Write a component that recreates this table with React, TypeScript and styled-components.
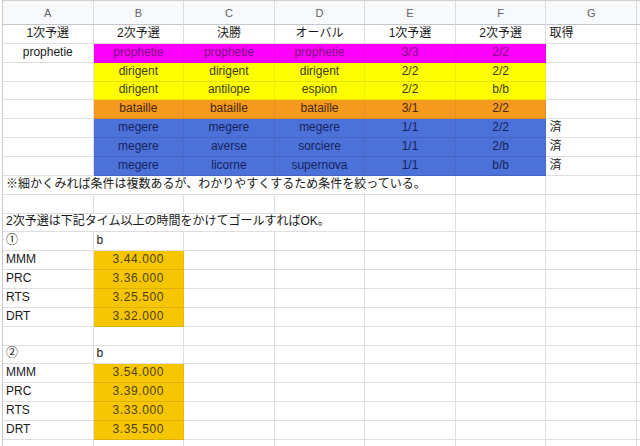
import React from 'react'
import styled, { createGlobalStyle } from 'styled-components'

const GlobalStyle = createGlobalStyle`
  html, body {
    margin: 0;
    padding: 0;
    background: #ffffff;
    overflow: hidden;
  }
  body {
    font-family: "Liberation Sans", "Noto Sans CJK JP", sans-serif;
  }
`

type Fill = 'magenta' | 'yellow' | 'orange' | 'blue' | 'gold'

const fills: Record<Fill, { bg: string; fg: string }> = {
  magenta: { bg: '#fd00fc', fg: '#7e0a82' },
  yellow: { bg: '#fffe00', fg: '#3c3c04' },
  orange: { bg: '#f5991f', fg: '#47280c' },
  blue: { bg: '#4c71d8', fg: '#16245e' },
  gold: { bg: '#f6c602', fg: '#4f3f04' },
}

type CellSpec = {
  text?: string
  fill?: Fill
  align?: 'left' | 'center'
  span?: number
}

const COLS = ['A', 'B', 'C', 'D', 'E', 'F', 'G', '']

const Sheet = styled.div`
  display: grid;
  grid-template-columns: repeat(7, 90.57px) 1fr;
  grid-template-rows: 24px;
  grid-auto-rows: 18.87px;
  width: 638px;
  margin-left: 2px;
  border-left: 1px solid #c9c9c9;
  border-top: 1px solid #d0d0d0;
  box-sizing: border-box;
  height: 446px;
  overflow: hidden;
`

const ColHeader = styled.div`
  display: flex;
  align-items: center;
  justify-content: center;
  background: #f8f9fa;
  border-right: 1px solid #dadcdf;
  border-bottom: 1px solid #c4c7c9;
  box-sizing: border-box;
  color: #5f6368;
  font-size: 11px;
`

const Cell = styled.div<{ $fill?: Fill; $align: 'left' | 'center'; $span: number }>`
  grid-column: span ${(p) => p.$span};
  display: flex;
  align-items: flex-end;
  justify-content: ${(p) => (p.$align === 'center' ? 'center' : 'flex-start')};
  padding: 0 3px 2px;
  box-sizing: border-box;
  min-width: 0;
  white-space: nowrap;
  overflow: visible;
  font-size: 12px;
  line-height: 15px;
  letter-spacing: ${(p) => (p.$fill === 'gold' ? '0.6px' : 'normal')};
  background: ${(p) => (p.$fill ? fills[p.$fill].bg : '#ffffff')};
  color: ${(p) => (p.$fill ? fills[p.$fill].fg : '#1a1a1a')};
  border-right: 1px solid ${(p) => (p.$fill ? 'rgba(0, 0, 0, 0.06)' : '#dedede')};
  border-bottom: 1px solid ${(p) => (p.$fill ? 'rgba(0, 0, 0, 0.1)' : '#dedede')};
`

const c = (text: string, fill?: Fill): CellSpec => ({ text, fill, align: 'center' })
const l = (text = ''): CellSpec => ({ text, align: 'left' })

const timeRows = (values: string[]): CellSpec[][] =>
  ['MMM', 'PRC', 'RTS', 'DRT'].map((name, i) => [l(name), c(values[i], 'gold')])

const rows: CellSpec[][] = [
  [c('1次予選'), c('2次予選'), c('決勝'), c('オーバル'), c('1次予選'), c('2次予選'), l('取得')],
  [c('prophetie'), c('prophetie', 'magenta'), c('prophetie', 'magenta'), c('prophetie', 'magenta'), c('3/3', 'magenta'), c('2/2', 'magenta')],
  [l(), c('dirigent', 'yellow'), c('dirigent', 'yellow'), c('dirigent', 'yellow'), c('2/2', 'yellow'), c('2/2', 'yellow')],
  [l(), c('dirigent', 'yellow'), c('antilope', 'yellow'), c('espion', 'yellow'), c('2/2', 'yellow'), c('b/b', 'yellow')],
  [l(), c('bataille', 'orange'), c('bataille', 'orange'), c('bataille', 'orange'), c('3/1', 'orange'), c('2/2', 'orange')],
  [l(), c('megere', 'blue'), c('megere', 'blue'), c('megere', 'blue'), c('1/1', 'blue'), c('2/2', 'blue'), l('済')],
  [l(), c('megere', 'blue'), c('averse', 'blue'), c('sorciere', 'blue'), c('1/1', 'blue'), c('2/b', 'blue'), l('済')],
  [l(), c('megere', 'blue'), c('licorne', 'blue'), c('supernova', 'blue'), c('1/1', 'blue'), c('b/b', 'blue'), l('済')],
  [{ text: '※細かくみれば条件は複数あるが、わかりやすくするため条件を絞っている。', align: 'left', span: 5 }],
  [],
  [{ text: '2次予選は下記タイム以上の時間をかけてゴールすればOK。', align: 'left', span: 4 }],
  [l('①'), l('b')],
  ...timeRows(['3.44.000', '3.36.000', '3.25.500', '3.32.000']),
  [],
  [l('②'), l('b')],
  ...timeRows(['3.54.000', '3.39.000', '3.33.000', '3.35.500']),
  [],
]

// pad every row out to the 8 visible columns
const fillRow = (row: CellSpec[]): CellSpec[] => {
  const used = row.reduce((n, cell) => n + (cell.span ?? 1), 0)
  return [...row, ...Array.from({ length: COLS.length - used }, () => l())]
}

const App = () => {
  return (
    <>
      <GlobalStyle />
      <Sheet>
        {COLS.map((col, i) => (
          <ColHeader key={`h${i}`}>{col}</ColHeader>
        ))}
        {rows.map((row, r) =>
          fillRow(row).map((cell, i) => (
            <Cell
              key={`${r}-${i}`}
              $fill={cell.fill}
              $align={cell.align ?? 'left'}
              $span={cell.span ?? 1}
            >
              {cell.text}
            </Cell>
          )),
        )}
      </Sheet>
    </>
  )
}

export default App
